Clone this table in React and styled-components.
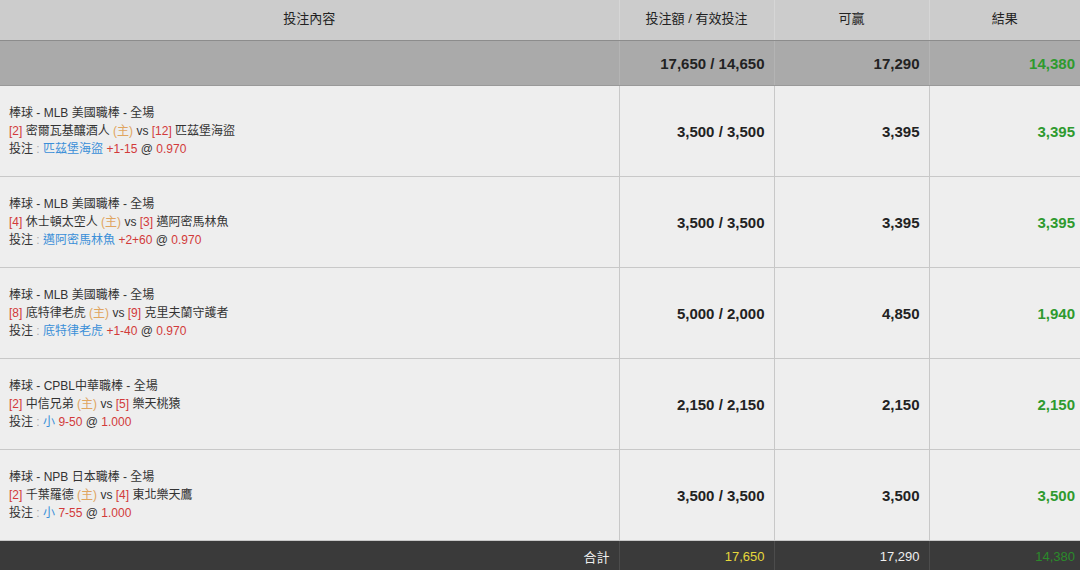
import React from "react";
import styled, { createGlobalStyle } from "styled-components";

const GlobalStyle = createGlobalStyle`
  body {
    margin: 0;
    background: #eeeeee;
    font-family: "Liberation Sans", Arial, "Noto Sans CJK TC", sans-serif;
    color: #222;
  }
`;

const Table = styled.table`
  width: 1080px;
  border-collapse: collapse;
  table-layout: fixed;
`;

const HeadCell = styled.th`
  height: 35px;
  padding: 0 0 5px;
  background: #cccccc;
  border-bottom: 1px solid #8c8c8c;
  border-left: 1px solid #d6d6d6;
  font-size: 13px;
  font-weight: normal;
  color: #222;
  text-align: center;
  &:first-child {
    border-left: none;
  }
`;

const SumCell = styled.td`
  height: 44px;
  padding: 0 9px 0 10px;
  background: #aaaaaa;
  border-bottom: 1px solid #999;
  border-left: 1px solid #b4b4b4;
  font-size: 15px;
  font-weight: bold;
  text-align: right;
  color: ${(p) => p.$color || "#222"};
  &:first-child {
    border-left: none;
  }
  &:last-child {
    padding-right: 5px;
  }
`;

const Cell = styled.td`
  height: 90px;
  padding: 0 9px 0 10px;
  background: #eeeeee;
  border-bottom: 1px solid #c8c8c8;
  border-left: 1px solid #c8c8c8;
  font-size: 15px;
  font-weight: bold;
  text-align: right;
  color: ${(p) => p.$color || "#222"};
  &:first-child {
    border-left: none;
  }
  &:last-child {
    padding-right: 5px;
  }
`;

const BetCell = styled(Cell)`
  text-align: left;
  font-size: 12px;
  font-weight: normal;
  line-height: 18px;
  color: #333;
  padding-left: 9px;
`;

const FootCell = styled.td`
  height: 30px;
  padding: 0 9px 0 10px;
  background: #3a3a3a;
  border-left: 1px solid #4c4c4c;
  font-size: 13px;
  text-align: right;
  color: ${(p) => p.$color || "#eee"};
  &:first-child {
    border-left: none;
  }
  &:last-child {
    padding-right: 5px;
  }
`;

const Red = styled.span`
  color: #d23a3a;
`;
const Home = styled.span`
  color: #e0a560;
`;
const Blue = styled.span`
  color: #3a8fd8;
`;
const Sep = styled.span`
  color: #aaa;
`;

const rows = [
  {
    league: "棒球 - MLB 美國職棒 - 全場",
    home: ["[2]", "密爾瓦基釀酒人"],
    away: ["[12]", "匹茲堡海盜"],
    pick: "匹茲堡海盜",
    line: "+1-15",
    odds: "0.970",
    stake: "3,500 / 3,500",
    win: "3,395",
    result: "3,395",
  },
  {
    league: "棒球 - MLB 美國職棒 - 全場",
    home: ["[4]", "休士頓太空人"],
    away: ["[3]", "邁阿密馬林魚"],
    pick: "邁阿密馬林魚",
    line: "+2+60",
    odds: "0.970",
    stake: "3,500 / 3,500",
    win: "3,395",
    result: "3,395",
  },
  {
    league: "棒球 - MLB 美國職棒 - 全場",
    home: ["[8]", "底特律老虎"],
    away: ["[9]", "克里夫蘭守護者"],
    pick: "底特律老虎",
    line: "+1-40",
    odds: "0.970",
    stake: "5,000 / 2,000",
    win: "4,850",
    result: "1,940",
  },
  {
    league: "棒球 - CPBL中華職棒 - 全場",
    home: ["[2]", "中信兄弟"],
    away: ["[5]", "樂天桃猿"],
    pick: "小",
    line: "9-50",
    odds: "1.000",
    stake: "2,150 / 2,150",
    win: "2,150",
    result: "2,150",
  },
  {
    league: "棒球 - NPB 日本職棒 - 全場",
    home: ["[2]", "千葉羅德"],
    away: ["[4]", "東北樂天鷹"],
    pick: "小",
    line: "7-55",
    odds: "1.000",
    stake: "3,500 / 3,500",
    win: "3,500",
    result: "3,500",
  },
];

export default function App() {
  return (
    <>
      <GlobalStyle />
      <Table>
        <colgroup>
          <col style={{ width: 619 }} />
          <col style={{ width: 155 }} />
          <col style={{ width: 155 }} />
          <col style={{ width: 151 }} />
        </colgroup>
        <thead>
          <tr>
            <HeadCell>投注內容</HeadCell>
            <HeadCell>投注額 / 有效投注</HeadCell>
            <HeadCell>可贏</HeadCell>
            <HeadCell>結果</HeadCell>
          </tr>
        </thead>
        <tbody>
          <tr>
            <SumCell />
            <SumCell>17,650 / 14,650</SumCell>
            <SumCell>17,290</SumCell>
            <SumCell $color="#2e9a2e">14,380</SumCell>
          </tr>
          {rows.map((r, i) => (
            <tr key={i}>
              <BetCell>
                <div>{r.league}</div>
                <div>
                  <Red>{r.home[0]}</Red> {r.home[1]} <Home>(主)</Home> vs{" "}
                  <Red>{r.away[0]}</Red> {r.away[1]}
                </div>
                <div>
                  投注<Sep> : </Sep>
                  <Blue>{r.pick}</Blue> <Red>{r.line}</Red> @{" "}
                  <Red>{r.odds}</Red>
                </div>
              </BetCell>
              <Cell>{r.stake}</Cell>
              <Cell>{r.win}</Cell>
              <Cell $color="#2e9a2e">{r.result}</Cell>
            </tr>
          ))}
          <tr>
            <FootCell>合計</FootCell>
            <FootCell $color="#e6d83a">17,650</FootCell>
            <FootCell>17,290</FootCell>
            <FootCell $color="#2a8a2a">14,380</FootCell>
          </tr>
        </tbody>
      </Table>
    </>
  );
}
